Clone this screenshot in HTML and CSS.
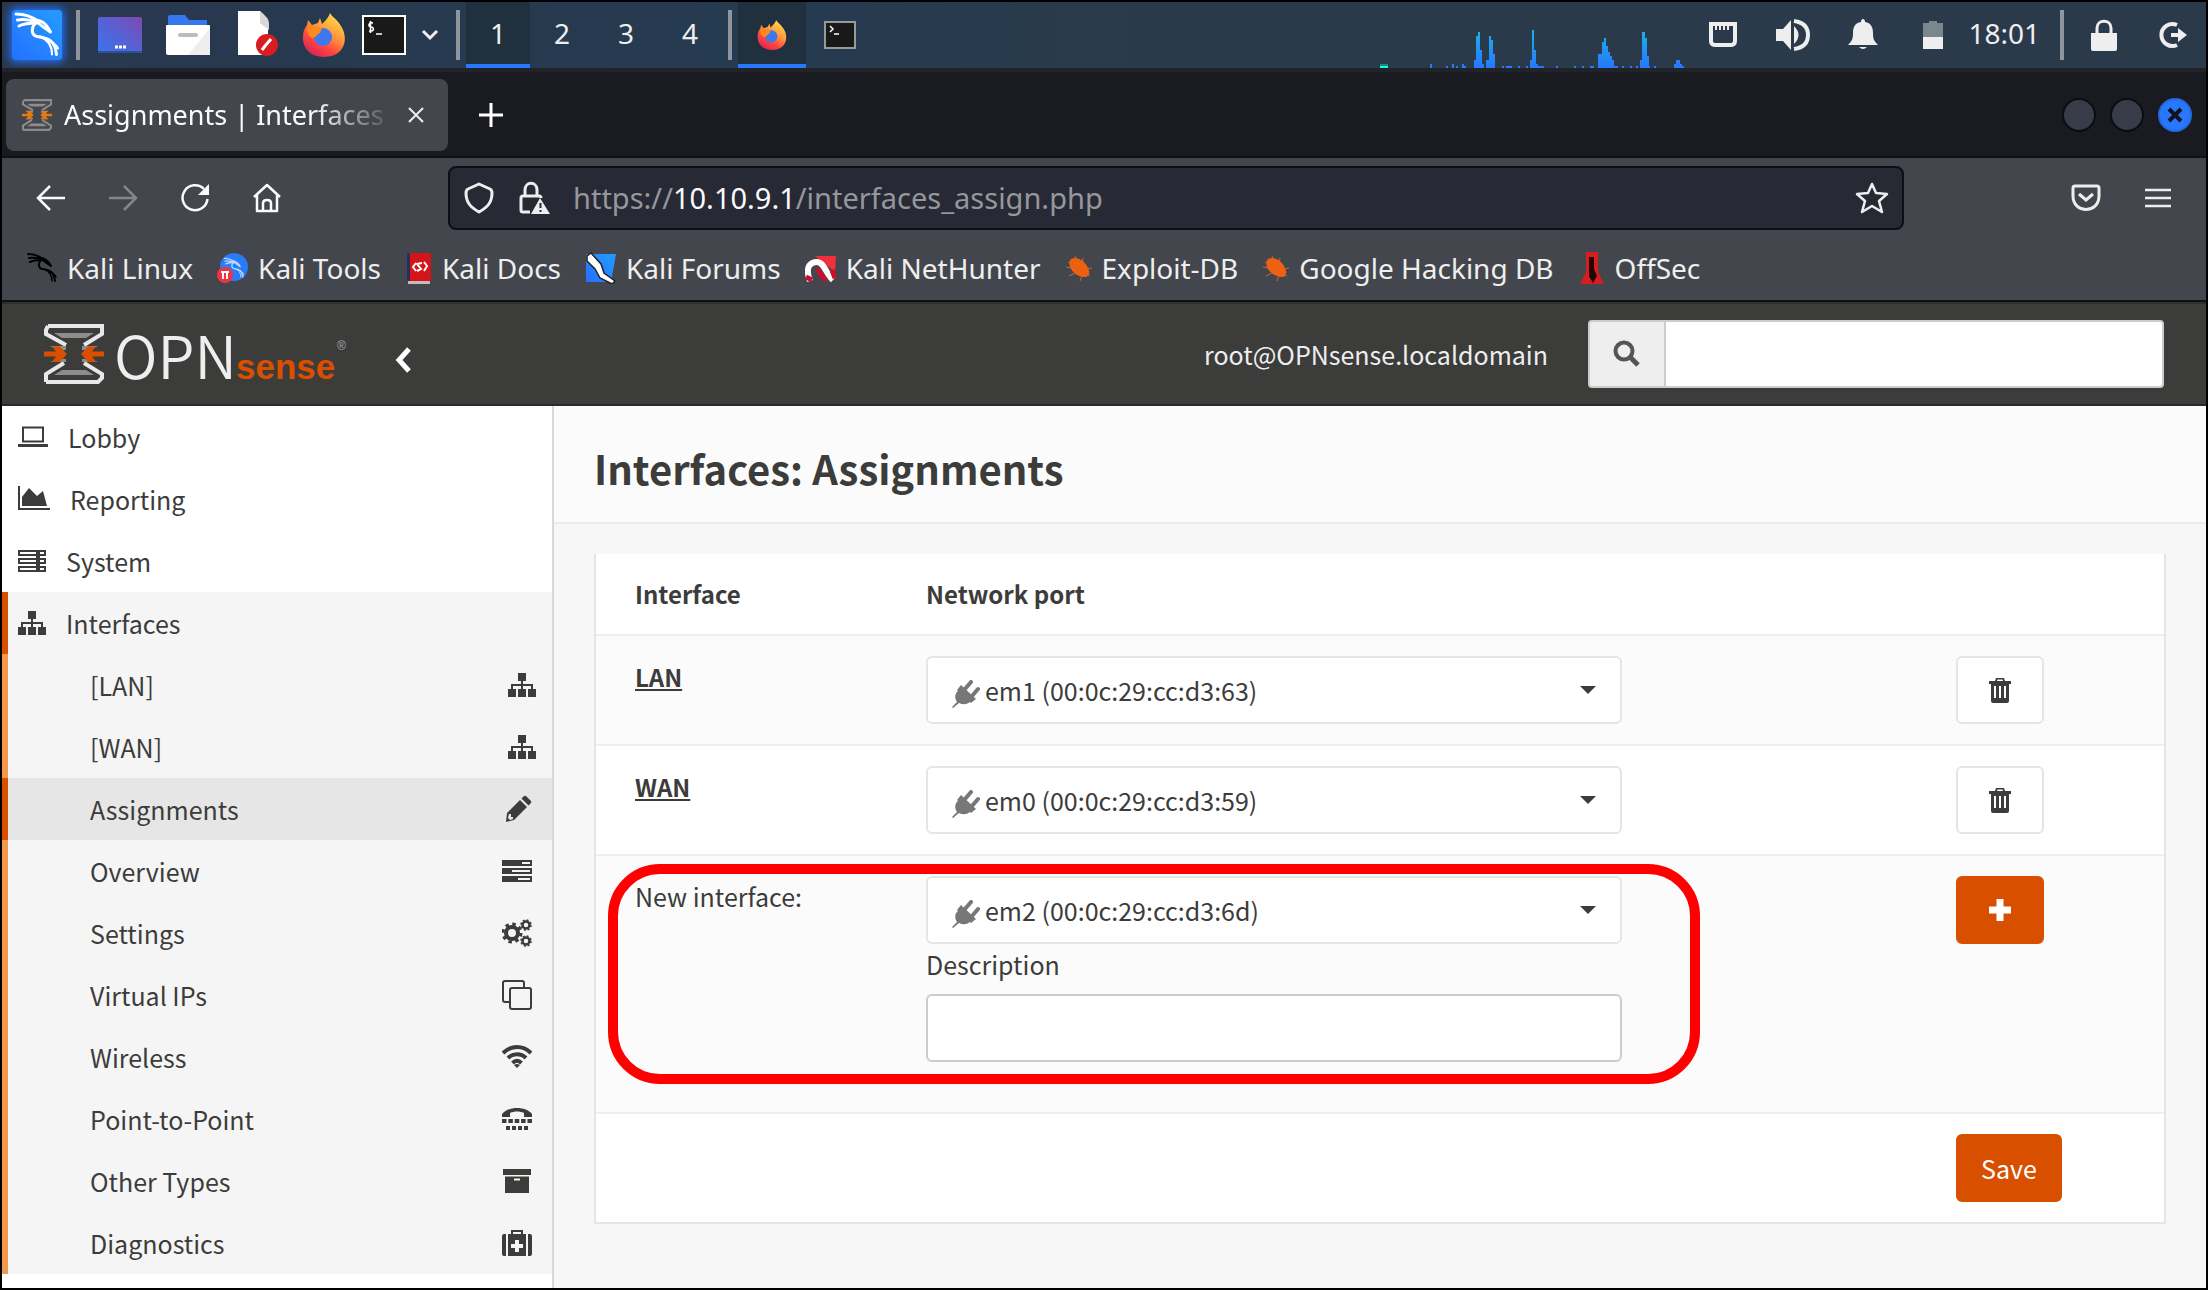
FILE: index.html
```html
<!DOCTYPE html>
<html lang="en">
<head>
<meta charset="utf-8">
<title>Assignments | Interfaces | OPNsense</title>
<link rel="stylesheet" href="styles.css">
</head>
<body>
<svg class="defs" aria-hidden="true">
  <defs>
    <linearGradient id="g-blue" x1="0" y1="1" x2="1" y2="0"><stop offset="0" stop-color="#2470ff"/><stop offset="1" stop-color="#249cff"/></linearGradient>
    <linearGradient id="g-desk" x1="0" y1="1" x2="1" y2="0"><stop offset="0" stop-color="#3b74ee"/><stop offset=".5" stop-color="#5661d6"/><stop offset="1" stop-color="#8149ae"/></linearGradient>
    <linearGradient id="g-fox" x1=".8" y1="0" x2=".2" y2="1"><stop offset="0" stop-color="#ffe14d"/><stop offset=".4" stop-color="#ff9a3c"/><stop offset=".7" stop-color="#ff4340"/><stop offset="1" stop-color="#d0215a"/></linearGradient>
    <linearGradient id="g-net" gradientUnits="userSpaceOnUse" x1="0" y1="30" x2="0" y2="66"><stop offset="0" stop-color="#19b0e8"/><stop offset="1" stop-color="#2777ff"/></linearGradient>
  </defs>
  <symbol id="dragon" viewBox="0 0 32 32"><g fill="none" stroke="currentColor" stroke-linecap="round" stroke-linejoin="round"><path d="M2 2c6 0 11 2 15 5M3 6c5-1 9 0 14 2M4 10c4-2 8-2 12-2" stroke-width="2"/><path d="M14 6c5 0 8 2 11 8M17 8c2 2 5 4 8 6" stroke-width="2"/><path d="M15 8c-3 3-3 8 1 9 7 1 12 2 13 12" stroke-width="2"/><path d="M21 18c4 2 8 4 9 7M18 17c5 2 8 6 8 12" stroke-width="1.4"/></g></symbol>
  <symbol id="firefox" viewBox="0 0 44 44"><path d="M28 0c2 4 8 7 11 13 8 12 4 31-17 31C7 44 0 34 1 23c0-5 2-8 4-11l1-5 4 5 6-2 2-5 2 6c4-4 7-7 8-11z" fill="url(#g-fox)"/><circle cx="21" cy="24" r="9" fill="#3d78ee"/><path d="M6 12c5 0 9 2 14 3l-2 5c-3 1-4 5-8 5-4-2-6-7-4-13z" fill="#ff8a1c"/></symbol>
  <symbol id="term" viewBox="0 0 44 40"><rect x="1" y="1" width="42" height="38" fill="#191919" stroke="#fff" stroke-width="2"/><path d="M11 8c-5-1-5 4-2 4s4 5-2 4M8.500 6v12M14 19h6" stroke="#fff" stroke-width="1.600" fill="none"/></symbol>
  <symbol id="hourglass" viewBox="0 0 60 60"><path d="M4 2h54v8L40 21M4 2L2 6v4l20 11M2 58V50l18-11M2 58h52l4-4v-4L40 39" stroke="var(--edge)" stroke-width="4" fill="none"/><path d="M10 9h40l-8 5H18zM10 51h40l-8-5H18zM6 22h16v4h-8zM54 22H38v4h8zM6 38h16v-3h-8zM54 38H38v-3h8z" fill="#8d8d8d"/><path d="M0 27.500h12l-4-5h8l7 7.500-7 8H8l4-5.500H0zM60 27.500H48l4-5h-8L37 30l7 8h8l-4-5.500h12z" fill="var(--hot)"/></symbol>
  <symbol id="laptop" viewBox="0 0 30 28"><path d="M5 4.500h20v14H5z" fill="none" stroke="currentColor" stroke-width="2"/><path d="M0 21h30v3H0z" fill="currentColor"/></symbol>
  <symbol id="area" viewBox="0 0 32 28"><path d="M1 1v23h31" fill="none" stroke="currentColor" stroke-width="2"/><path d="M4 21V12l7-9 8 8 6-5 4 15z" fill="currentColor"/></symbol>
  <symbol id="server" viewBox="0 0 28 28"><path d="M1 4h26v4H1zM1 12h26v4H1zM1 20h26v4H1z" fill="none" stroke="currentColor" stroke-width="2"/><path d="M18 3h4v22h-4z" fill="currentColor"/></symbol>
  <symbol id="sitemap" viewBox="0 0 28 28"><path d="M10 2h8v8h-8zM0 18h8v8H0zM10 18h8v8h-8zM20 18h8v8h-8z" fill="currentColor"/><path d="M14 8v12M4 19v-5h20v5" fill="none" stroke="currentColor" stroke-width="2"/></symbol>
  <symbol id="pencil" viewBox="0 0 28 28"><path fill="currentColor" fill-rule="evenodd" d="M3 18L16 5l7 7-13 13-8 2zM17.500 3.500l2-2c1-1 2-1 3 0l4 4c1 1 1 2 0 3l-2 2zM5 19l-1 4 2 2 3-1v-2H7v-3z"/></symbol>
  <symbol id="tasks" viewBox="0 0 30 28"><path fill="currentColor" fill-rule="evenodd" d="M0 3h30v6H0zm20 2v2h8V5zM0 11h30v6H0zm10 2v2h18v-2zM0 19h30v6H0zm16 2v2h12v-2z"/></symbol>
  <symbol id="gears" viewBox="0 0 30 28"><g fill="none" stroke="currentColor"><circle cx="10" cy="14" r="6" stroke-width="4"/><circle cx="10" cy="14" r="9" stroke-width="3" stroke-dasharray="3.500 3.570"/><circle cx="24" cy="6" r="3.500" stroke-width="2.500"/><circle cx="24" cy="6" r="5" stroke-width="1.600" stroke-dasharray="2 1.930"/><circle cx="24" cy="22" r="3.500" stroke-width="2.500"/><circle cx="24" cy="22" r="5" stroke-width="1.600" stroke-dasharray="2 1.930"/></g></symbol>
  <symbol id="clone" viewBox="0 0 30 30"><g fill="none" stroke="currentColor" stroke-width="2"><rect x="8" y="8" width="21" height="21" rx="2"/><path d="M22 7V3a2 2 0 0 0-2-2H3a2 2 0 0 0-2 2v17a2 2 0 0 0 2 2h4"/></g></symbol>
  <symbol id="wifi" viewBox="0 0 30 28"><g fill="none" stroke="currentColor" stroke-width="4"><path d="M1 10c8-8 20-8 28 0M6 15c5-5 13-5 18 0M10.500 20c3-3 6-3 9 0" /></g><path d="M12 22c2-1.500 4-1.500 6 0l-3 3z" fill="currentColor"/></symbol>
  <symbol id="tty" viewBox="0 0 30 28"><path d="M0 12V9C6 1 24 1 30 9v3h-8V8c-4-2-10-2-14 0v4z" fill="currentColor"/><path d="M0 16h30" stroke="currentColor" stroke-width="4" stroke-dasharray="4.500 1.870"/><path d="M4 23h22" stroke="currentColor" stroke-width="4" stroke-dasharray="4 2"/></symbol>
  <symbol id="archive" viewBox="0 0 30 28"><path fill="currentColor" fill-rule="evenodd" d="M1 2h28v6H1zM3 9.500h24V26H3zm9 2v2h6v-2z"/></symbol>
  <symbol id="medkit" viewBox="0 0 30 28"><path fill="currentColor" fill-rule="evenodd" d="M0 7q0-2 2-2h2v22H2q-2 0-2-2zM6 5h18v22H6zm7 6v4H9v4h4v4h4v-4h4v-4h-4v-4zM26 5h2q2 0 2 2v18q0 2-2 2h-2z"/><path d="M10 6V2h10v4" fill="none" stroke="currentColor" stroke-width="2"/></symbol>
  <symbol id="plug" viewBox="0 0 28 28"><path d="M0 27l5-5c-3-5-2-9 2-12l12 11c-4 4-8 4-12 2l-6 5z" fill="#777"/><path d="M5 10l4-5 15 14-5 4z" fill="#777"/><path d="M13 9l6-7M20 16l6-7" stroke="#777" stroke-width="4" stroke-linecap="round"/></symbol>
  <symbol id="trash" viewBox="0 0 22 26"><path fill="currentColor" fill-rule="evenodd" d="M0 4h6l1-3h8l1 3h6v3H0zm8 0h6l-.5-1.500h-5zM2 7h18v17q0 2-2 2H4q-2 0-2-2zm3 2v12h2V9zm5 0v12h2V9zm5 0v12h2V9z"/></symbol>
  <symbol id="bug" viewBox="0 0 28 28"><path d="M6 5c6-3 14 2 17 9 3 6 0 9-3 9-7 0-13-5-15-10-1-3-1-6 1-8z" fill="#f0600f"/><path d="M3 8l22 14M10 2l3 6M1 13l6 1M4 22l6-3M15 27l2-5M18 4l-1 5M27 14l-5 1" stroke="#c96a2e" stroke-width="1"/></symbol>
</svg>

<header class="panel">
  <button class="panel-btn launch-kali" aria-label="Applications"><svg width="50" height="50" viewBox="0 0 50 50"><rect width="50" height="50" rx="2" fill="url(#g-blue)"/><use href="#dragon" x="1" y="1" width="48" height="48" color="#fff"/></svg></button>
  <span class="sep"></span>
  <button class="panel-btn" aria-label="Show desktop"><svg width="44" height="36"><rect width="44" height="36" rx="2" fill="url(#g-desk)"/><path d="M0 34h44v2H0z" fill="#2d4f9f"/><path d="M17 30h3m1 0h3m1 0h3" stroke="#fff" stroke-width="3"/></svg></button>
  <button class="panel-btn" aria-label="File manager"><svg width="44" height="40"><path d="M2 10V2q0-2 2-2h15l4 5h18v5z" fill="#3577ee"/><path d="M0 11q0-1 1-1h42q1 0 1 1v27q0 2-2 2H2q-2 0-2-2z" fill="#fff"/><path d="M44 13v27H22z" fill="#eee"/><rect x="12" y="18" width="20" height="4" rx="2" fill="#bcbcbc"/></svg></button>
  <button class="panel-btn" aria-label="Text editor"><svg width="44" height="48"><path d="M4 0h22l8 10v34H4z" fill="#fff"/><path d="M26 0v12l9 7v-7q0-5-9-12z" fill="#d8d8d8"/><circle cx="33" cy="34" r="11" fill="#d81c22"/><path d="M28 39l3-4 6-7" stroke="#fff" stroke-width="3"/></svg></button>
  <button class="panel-btn" aria-label="Firefox"><svg width="44" height="46"><use href="#firefox"/></svg></button>
  <button class="panel-btn tight" aria-label="Terminal"><svg width="44" height="40"><use href="#term"/></svg></button>
  <button class="panel-btn narrow" aria-label="More terminals"><svg width="18" height="12"><path d="M2 2l7 7 7-7" fill="none" stroke="#eee" stroke-width="3"/></svg></button>
  <span class="sep"></span>
  <nav class="spaces" aria-label="Workspaces"><button class="space active">1</button><button class="space">2</button><button class="space">3</button><button class="space">4</button></nav>
  <span class="sep"></span>
  <button class="panel-btn task active" aria-label="Firefox window"><svg width="30" height="30"><use href="#firefox"/></svg></button>
  <button class="panel-btn task" aria-label="Terminal window"><svg width="32" height="28"><rect x="1" y="1" width="30" height="26" fill="#191919" stroke="#999" stroke-width="2"/><path d="M6 5l3 3-3 3M10 13h5" stroke="#fff" stroke-width="1.500" fill="none"/></svg></button>
  <svg class="netgraph" width="320" height="66" viewBox="0 0 320 66"><path d="M12 62h8v2h-8z" fill="#1a8a80"/><path d="M12 64h8v2h-8z" fill="#19f5e0"/><path fill="url(#g-net)" d="M62 62h2v4h-2zM78 64h2v2h-2zM84 62h2v4h-2zM88 64h2v2h-2zM94 62h2v2h2v2h-4zM106 66v-8h2V34h2v-4h2v18h2v14h2v4zM118 66v-8h3V34h2v4h2v14h2v14zM134 64h2v2h-2zM138 64h6v2h-6zM150 64h2v2h-2zM158 64h2v2h-2zM162 66v-8h2V28h2v20h2v14h2v2h6v2zM188 64h2v2h-2zM206 64h2v2h-2zM214 64h2v2h-2zM222 64h4v2h-4zM230 66V52h4V40h2v-4h2v8h2v6h2v4h2v4h2v6h4v2zM254 64h2v2h-2zM262 64h2v2h-2zM268 64h2v2h-2zM272 66v-8h2V30h3v6h2v18h2v10h1v2zM286 64h2v2h-2zM306 66v-4h2v-4h4v4h2v2h2v2z"/></svg>
  <button class="panel-btn tray" aria-label="Network"><svg width="30" height="28"><path d="M3 3h24v17q0 4-5 4H8q-5 0-5-4z" fill="none" stroke="#eee" stroke-width="4"/><path d="M8 3v6m4-6v6m4-6v6m4-6v6" stroke="#eee" stroke-width="2"/></svg></button>
  <button class="panel-btn tray" aria-label="Volume"><svg width="36" height="32"><path d="M1 10h7L16 1v30L8 22H1z" fill="#eee"/><path d="M19 7q9 9 0 18z" fill="#eee"/><path d="M19 2q14 2 14 14T19 30" fill="none" stroke="#eee" stroke-width="4"/></svg></button>
  <button class="panel-btn tray" aria-label="Notifications"><svg width="30" height="32"><path d="M15 0q2 0 2 3c6 1 8 5 8 11 0 6 1 8 5 12H0c4-4 5-6 5-12 0-6 2-10 8-11q0-3 2-3zM11 28h8q-4 4-8 0z" fill="#eee"/></svg></button>
  <button class="panel-btn tray" aria-label="Battery"><svg width="20" height="28"><path d="M0 16V2h6V0h8v2h6v14z" fill="#7b878f"/><path d="M0 16h20v12H0z" fill="#eee"/></svg></button>
  <span class="clock">18:01</span>
  <span class="sep"></span>
  <button class="panel-btn" aria-label="Lock"><svg width="28" height="32"><path d="M1 14h26v16q0 2-2 2H3q-2 0-2-2z" fill="#eee"/><path d="M7 15V9c0-9 14-9 14 0v6" fill="none" stroke="#eee" stroke-width="3"/></svg></button>
  <button class="panel-btn" aria-label="Log out"><svg width="30" height="28"><path d="M20 4A11 11 0 1 0 20 24" fill="none" stroke="#eee" stroke-width="4"/><path d="M14 12h7V7l9 7-9 7v-5h-7z" fill="#eee"/></svg></button>
</header>

<section class="titlebar">
  <div class="tab">
    <svg class="favicon" width="30" height="32" viewBox="0 0 60 60" preserveAspectRatio="none"><use href="#hourglass" width="60" height="60"/></svg>
    <span class="tab-title">Assignments | Interfaces |</span>
    <button class="icon-btn" aria-label="Close tab"><svg width="16" height="16"><path d="M1 1l14 14M15 1L1 15" stroke="#eee" stroke-width="2"/></svg></button>
  </div>
  <button class="icon-btn new-tab" aria-label="New tab"><svg width="26" height="26"><path d="M13 1v24M1 13h24" stroke="#fff" stroke-width="3"/></svg></button>
  <div class="win-buttons"><button aria-label="Minimize"></button><button aria-label="Maximize"></button><button class="close" aria-label="Close"><svg width="16" height="16"><path d="M2 2l12 12M14 2L2 14" stroke="#10131c" stroke-width="4"/></svg></button></div>
</section>

<section class="toolbar">
  <div class="nav-buttons">
    <button class="icon-btn" aria-label="Back"><svg width="30" height="30"><path d="M29 15H2M14 3L2 15l12 12" fill="none" stroke="#fbfbfe" stroke-width="2.500"/></svg></button>
    <button class="icon-btn" aria-label="Forward"><svg width="30" height="30"><path d="M1 15h27M16 3l12 12-12 12" fill="none" stroke="#85868b" stroke-width="2.500"/></svg></button>
    <button class="icon-btn" aria-label="Reload"><svg width="30" height="30"><path d="M24 6A12.500 12.500 0 1 0 27.500 16" fill="none" stroke="#fbfbfe" stroke-width="2.500"/><path d="M29 1v11H18z" fill="#fbfbfe"/></svg></button>
    <button class="icon-btn" aria-label="Home"><svg width="30" height="30"><path d="M2 14L15 2l13 12M5 12v16h20V12M11 28v-8q0-3 4-3t4 3v8" fill="none" stroke="#fbfbfe" stroke-width="2.500" stroke-linejoin="round"/></svg></button>
  </div>
  <div class="urlbar">
    <svg width="32" height="34"><path d="M16 3l11 5c2 1 2 2 2 4 0 9-4 14-13 19C7 26 3 21 3 12c0-2 0-3 2-4z" fill="none" stroke="#eee" stroke-width="3" stroke-linejoin="round"/></svg>
    <svg width="32" height="34"><path d="M7 15V9c0-9 12-9 12 0v6M12 31H5q-2 0-2-2V17q0-2 2-2h16q2 0 2 2" fill="none" stroke="#eee" stroke-width="3"/><path d="M22 17l10 16H13z" fill="#eee"/><path d="M22.500 22v5m0 2v2" stroke="#272934" stroke-width="2"/></svg>
    <div class="url">https://<b>10.10.9.1</b>/interfaces_assign.php</div>
    <button class="icon-btn" aria-label="Bookmark this page"><svg width="34" height="32"><path d="M17 2l4 9 11 1-8 7 3 11-10-6-10 6 3-11-8-7 11-1z" fill="none" stroke="#eee" stroke-width="2.500" stroke-linejoin="round"/></svg></button>
  </div>
  <div class="nav-end">
    <button class="icon-btn" aria-label="Save to Pocket"><svg width="30" height="28"><path d="M4 2h22q2 0 2 2v8c0 18-26 18-26 0V4q0-2 2-2zM8 10l7 6 7-6" fill="none" stroke="#eee" stroke-width="3"/></svg></button>
    <button class="icon-btn" aria-label="Menu"><svg width="26" height="22"><path d="M0 3h26M0 11h26M0 19h26" stroke="#eee" stroke-width="2.500"/></svg></button>
  </div>
</section>

<nav class="bookmarks" aria-label="Bookmarks">
  <a href="#"><svg width="32" height="32" color="#000"><use href="#dragon"/></svg>Kali Linux</a>
  <a href="#"><svg width="32" height="32"><circle cx="17" cy="15" r="14" fill="#2a7cf6"/><use href="#dragon" x="5" y="5" width="24" height="22" color="#bcd8ff"/><circle cx="8" cy="23" r="8" fill="#ef3340"/><path d="M4 20h8M6 20v7m4-7v7" stroke="#fff" stroke-width="2"/></svg>Kali Tools</a>
  <a href="#"><svg width="28" height="32"><path d="M2 1h24v28H2z" fill="#d3151b"/><path d="M2 1h3v28H2z" fill="#272e5a"/><path d="M3 29h22v3H3z" fill="#c9b9ba"/><path d="M11 11l-3 4 3 4M19 10l3 4-3 5M17 11l-5 1 4 5-4 2" stroke="#fff" stroke-width="2" fill="none"/></svg>Kali Docs</a>
  <a href="#"><svg width="32" height="32"><path d="M1 2h30L26 30H1z" fill="url(#g-blue)"/><path d="M2 4l4-3 10 11 3 9 11 8-3 3-12-6-5-9L2 9z" fill="#fff" stroke="#222" stroke-width="1.500"/></svg>Kali Forums</a>
  <a href="#"><svg width="32" height="32"><path d="M10 4h21l-1 16z" fill="#f0303a"/><path d="M5 29C-1 13 7 10 12 10c7 0 9 12 16 18" stroke="#fff" stroke-width="6" fill="none"/><path d="M12 17l9 12M27 18l3 8M1 25l6 3" stroke="#c8102e" stroke-width="5"/></svg>Kali NetHunter</a>
  <a href="#"><svg width="28" height="28"><use href="#bug"/></svg>Exploit-DB</a>
  <a href="#"><svg width="28" height="28"><use href="#bug"/></svg>Google Hacking DB</a>
  <a href="#"><svg width="28" height="32"><path d="M8 0h12v20l6 12H2l6-12z" fill="#d91c20"/><path d="M11 5h5v12l3 7-4 7-4-7z" fill="#220606"/></svg>OffSec</a>
</nav>

<header class="app-header">
  <a class="logo" href="#" aria-label="OPNsense"><svg width="302" height="64" viewBox="0 0 302 64"><use href="#hourglass" y="2" width="60" height="60"/><text x="70" y="57" class="logo-opn">OPN</text><text x="192" y="57" class="logo-sense">sense</text><text x="293" y="28" class="logo-reg">®</text></svg></a>
  <button class="icon-btn collapse" aria-label="Collapse menu"><svg width="18" height="26"><path d="M15 2L5 13l10 11" fill="none" stroke="#fff" stroke-width="5"/></svg></button>
  <span class="user">root@OPNsense.localdomain</span>
  <form class="search"><label for="q"><svg width="28" height="28"><circle cx="11" cy="11" r="8.500" fill="none" stroke="#555" stroke-width="4"/><path d="M17 17l8 8" stroke="#555" stroke-width="5"/></svg></label><input id="q" type="text" aria-label="Search"></form>
</header>

<div class="app">
  <nav class="sidebar" aria-label="Main menu">
    <a class="top" href="#"><svg width="30" height="28"><use href="#laptop"/></svg>Lobby</a>
    <a class="top" href="#"><svg width="32" height="28"><use href="#area"/></svg>Reporting</a>
    <a class="top" href="#"><svg width="28" height="28"><use href="#server"/></svg>System</a>
    <a class="top open" href="#"><svg width="28" height="28"><use href="#sitemap"/></svg>Interfaces</a>
    <a class="sub" href="#">[LAN]<svg class="edge" width="28" height="28"><use href="#sitemap"/></svg></a>
    <a class="sub" href="#">[WAN]<svg class="edge" width="28" height="28"><use href="#sitemap"/></svg></a>
    <a class="sub current" href="#">Assignments<svg width="28" height="28"><use href="#pencil"/></svg></a>
    <a class="sub" href="#">Overview<svg width="30" height="28"><use href="#tasks"/></svg></a>
    <a class="sub" href="#">Settings<svg width="30" height="28"><use href="#gears"/></svg></a>
    <a class="sub" href="#">Virtual IPs<svg width="30" height="30"><use href="#clone"/></svg></a>
    <a class="sub" href="#">Wireless<svg width="30" height="28"><use href="#wifi"/></svg></a>
    <a class="sub" href="#">Point-to-Point<svg width="30" height="28"><use href="#tty"/></svg></a>
    <a class="sub" href="#">Other Types<svg width="30" height="28"><use href="#archive"/></svg></a>
    <a class="sub" href="#">Diagnostics<svg width="30" height="28"><use href="#medkit"/></svg></a>
  </nav>
  <main class="content">
    <div class="page-head"><h1>Interfaces: Assignments</h1></div>
    <form class="card">
      <table>
        <thead><tr><th class="c-name">Interface</th><th>Network port</th><th class="c-act"></th></tr></thead>
        <tbody>
          <tr>
            <td><a class="if-link" href="#">LAN</a></td>
            <td><div class="picker"><svg class="plug" width="28" height="28"><use href="#plug"/></svg><select aria-label="LAN network port"><option>em1 (00:0c:29:cc:d3:63)</option></select><span class="caret"></span></div></td>
            <td><button type="button" class="btn" aria-label="Delete LAN"><svg width="22" height="26"><use href="#trash"/></svg></button></td>
          </tr>
          <tr>
            <td><a class="if-link" href="#">WAN</a></td>
            <td><div class="picker"><svg class="plug" width="28" height="28"><use href="#plug"/></svg><select aria-label="WAN network port"><option>em0 (00:0c:29:cc:d3:59)</option></select><span class="caret"></span></div></td>
            <td><button type="button" class="btn" aria-label="Delete WAN"><svg width="22" height="26"><use href="#trash"/></svg></button></td>
          </tr>
          <tr>
            <td class="anchor"><label for="newport">New interface:</label><span class="highlight"></span></td>
            <td><div class="picker"><svg class="plug" width="28" height="28"><use href="#plug"/></svg><select id="newport"><option>em2 (00:0c:29:cc:d3:6d)</option></select><span class="caret"></span></div><label class="field-label" for="descr">Description</label><input class="field" id="descr" type="text"></td>
            <td><button type="button" class="btn primary" aria-label="Add interface"><svg width="22" height="22"><path d="M11 0v22M0 11h22" stroke="#fff" stroke-width="7"/></svg></button></td>
          </tr>
          <tr><td></td><td></td><td><button type="button" class="btn primary save">Save</button></td></tr>
        </tbody>
      </table>
    </form>
  </main>
</div>
</body>
</html>
```
FILE: styles.css
```css
* { box-sizing: border-box; }

body {
  margin: 0;
  min-height: 100vh;
  display: flex;
  flex-direction: column;
  border: 2px solid #000;
  background: #f7f7f7;
  font: 28px/40px "Noto Sans", sans-serif;
  color: #eee;
}

button, input, select { font: inherit; color: inherit; }
button { padding: 0; border: 0; background: none; }
a { color: inherit; text-decoration: none; }
svg { display: block; flex: none; }
.defs { position: absolute; width: 0; height: 0; }
.icon-btn, .panel-btn { display: flex; align-items: center; justify-content: center; }

/* Desktop panel */
.panel {
  display: flex;
  align-items: center;
  height: 66px;
  padding-left: 2px;
  background: linear-gradient(90deg, #29384e, #253b50 35%, #2a3a4a 55%, #2a3a4a);
}
.panel-btn { width: 68px; height: 66px; }
.launch-kali { width: 66px; }
.launch-kali svg { border-radius: 3px; box-shadow: 0 0 8px 2px #2470ff; }
.panel-btn.tight { width: 52px; }
.panel-btn.narrow { width: 40px; }
.panel-btn.tray { width: 70px; }
.sep { width: 4px; height: 50px; margin: 0 6px; background: #8e959e; }
.spaces { display: flex; }
.space { width: 64px; height: 66px; padding-bottom: 4px; }
.active { background: #20303f; box-shadow: inset 0 -4px #2777ff; }
.netgraph { margin-left: auto; }
.clock { padding: 0 14px 4px 0; }

/* Browser window */
.titlebar {
  display: flex;
  align-items: center;
  height: 90px;
  padding: 2px 14px 0 4px;
  border-top: 4px solid #202327;
  border-bottom: 2px solid #101216;
  background: #1a1b20;
}
.tab {
  display: flex;
  align-items: center;
  gap: 12px;
  width: 442px;
  height: 72px;
  padding: 0 24px 0 16px;
  border-radius: 8px;
  background: #44464d;
  --edge: #8b8b8b;
  --hot: #e8780c;
}
.tab-title {
  flex: 1;
  min-width: 0;
  white-space: nowrap;
  font-size: 27px;
  color: #fbfbfe;
  -webkit-mask-image: linear-gradient(90deg, #000 75%, transparent);
  mask-image: linear-gradient(90deg, #000 75%, transparent);
}
.new-tab { margin-left: 30px; }
.win-buttons { display: flex; gap: 14px; margin-left: auto; }
.win-buttons button {
  display: flex;
  align-items: center;
  justify-content: center;
  width: 34px;
  height: 34px;
  border: 2px solid #0c0d10;
  border-radius: 50%;
  background: #383b48;
}
.win-buttons .close { border-color: #2469e0; background: #2777ff; }
.toolbar {
  display: grid;
  grid-template-columns: 380px 1fr 242px;
  gap: 32px;
  align-items: center;
  padding: 8px 28px 6px 34px;
  background: #44464d;
}
.nav-buttons { display: flex; gap: 42px; }
.nav-end { display: flex; gap: 44px; justify-content: flex-end; padding-right: 7px; }
.urlbar {
  display: flex;
  align-items: center;
  gap: 23px;
  height: 64px;
  padding: 0 13px;
  border: 2px solid #0c0e14;
  border-radius: 8px;
  background: #272934;
}
.url { flex: 1; font-size: 29px; color: #96979d; }
.url b { font-weight: 400; color: #fbfbfe; }
.bookmarks {
  display: flex;
  gap: 24px;
  height: 66px;
  padding: 0 24px;
  align-items: center;
  border-bottom: 2px solid #0f1014;
  background: #44464d;
}
.bookmarks a { display: flex; align-items: center; gap: 9px; white-space: nowrap; }

/* OPNsense */
.app-header, .app { font: 25px/40px "Noto Sans CJK SC", "Noto Sans", sans-serif; }
.app-header {
  display: flex;
  align-items: center;
  height: 104px;
  padding: 0 42px;
  border-top: 2px solid #2f2f2e;
  border-bottom: 2px solid #2b2a2b;
  background: #3c3c3b;
  --edge: #e8e8ea;
  --hot: #d94f00;
}
.logo svg { overflow: visible; }
.logo-opn { font: 59px "Noto Sans CJK SC", sans-serif; font-weight: 350; fill: #eee; }
.logo-sense { font: bold 35px "Liberation Sans", sans-serif; fill: #d94f00; }
.logo-reg { font: 12px "Liberation Sans", sans-serif; fill: #aaa; }
.collapse { margin: 12px 0 0 48px; }
.user { margin-left: auto; }
.search { display: flex; width: 576px; height: 68px; margin-left: 40px; }
.search label {
  display: flex;
  align-items: center;
  justify-content: center;
  width: 78px;
  border: 2px solid #ccc;
  border-radius: 4px 0 0 4px;
  background: #eee;
}
.search input {
  flex: 1;
  min-width: 0;
  border: 2px solid #ccc;
  border-left: 0;
  border-radius: 0 4px 4px 0;
  background: #fff;
  color: #3c3c3b;
}
.app { flex: 1; display: flex; color: #3c3c3b; }
.sidebar { width: 552px; border-right: 2px solid #d9d9d9; background: #fff; }
.sidebar a { display: flex; align-items: center; height: 62px; }
.top { gap: 20px; padding: 0 16px; }
.open, .sub { background: #f5f5f5; box-shadow: inset 6px 0 #f0984c; }
.open, .current { box-shadow: inset 6px 0 #d94f00; }
.sub { justify-content: space-between; padding: 0 20px 0 88px; }
.sub .edge { margin-right: -4px; }
.current { background: #e6e6e6; }
.content { flex: 1; min-width: 0; }
.page-head {
  padding: 32px 40px 24px;
  border-bottom: 2px solid #ebebeb;
  background: #fbfbfb;
}
h1 { margin: 0; font-size: 40px; line-height: 60px; font-weight: 700; }
.card {
  margin: 30px 40px;
  border: 2px solid #e5e5e5;
  border-top: 0;
  background: #fff;
}
table { width: 100%; border-collapse: collapse; table-layout: fixed; }
th, td { padding: 20px; text-align: left; vertical-align: top; }
th, .if-link { font-size: 24px; font-weight: 700; }
th:first-child, td:first-child { padding-left: 39px; }
tbody tr { border-top: 2px solid #eee; }
tbody tr:nth-child(odd) { background: #fbfbfb; }
.c-name { width: 310px; }
.c-act { width: 228px; }
.if-link { text-decoration: underline; }
.picker { position: relative; width: 696px; max-width: 100%; }
.picker select {
  display: block;
  width: 100%;
  height: 68px;
  padding: 0 57px;
  border: 2px solid #e5e5e5;
  border-radius: 6px;
  background: #fff;
  appearance: none;
}
.plug { position: absolute; left: 26px; top: 24px; }
.caret {
  position: absolute;
  right: 26px;
  top: 30px;
  border: 8px solid transparent;
  border-top-color: #3c3c3b;
  border-bottom: 0;
}
.field-label { display: block; margin-bottom: 10px; }
.field {
  display: block;
  width: 696px;
  max-width: 100%;
  height: 68px;
  margin-bottom: 30px;
  padding: 0 24px;
  border: 2px solid #ccc;
  border-radius: 6px;
  background: #fff;
}
.btn {
  display: flex;
  align-items: center;
  justify-content: center;
  width: 88px;
  height: 68px;
  border: 2px solid #e5e5e5;
  border-radius: 6px;
  background: #fff;
}
.primary { border-color: #d94f00; background: #d94f00; color: #fff; }
.save { width: 106px; }
.anchor { position: relative; }
.highlight {
  position: absolute;
  z-index: 1;
  left: 12px;
  top: 8px;
  width: 1092px;
  height: 220px;
  border: 10px solid #f00;
  border-radius: 52px;
  pointer-events: none;
}
```
